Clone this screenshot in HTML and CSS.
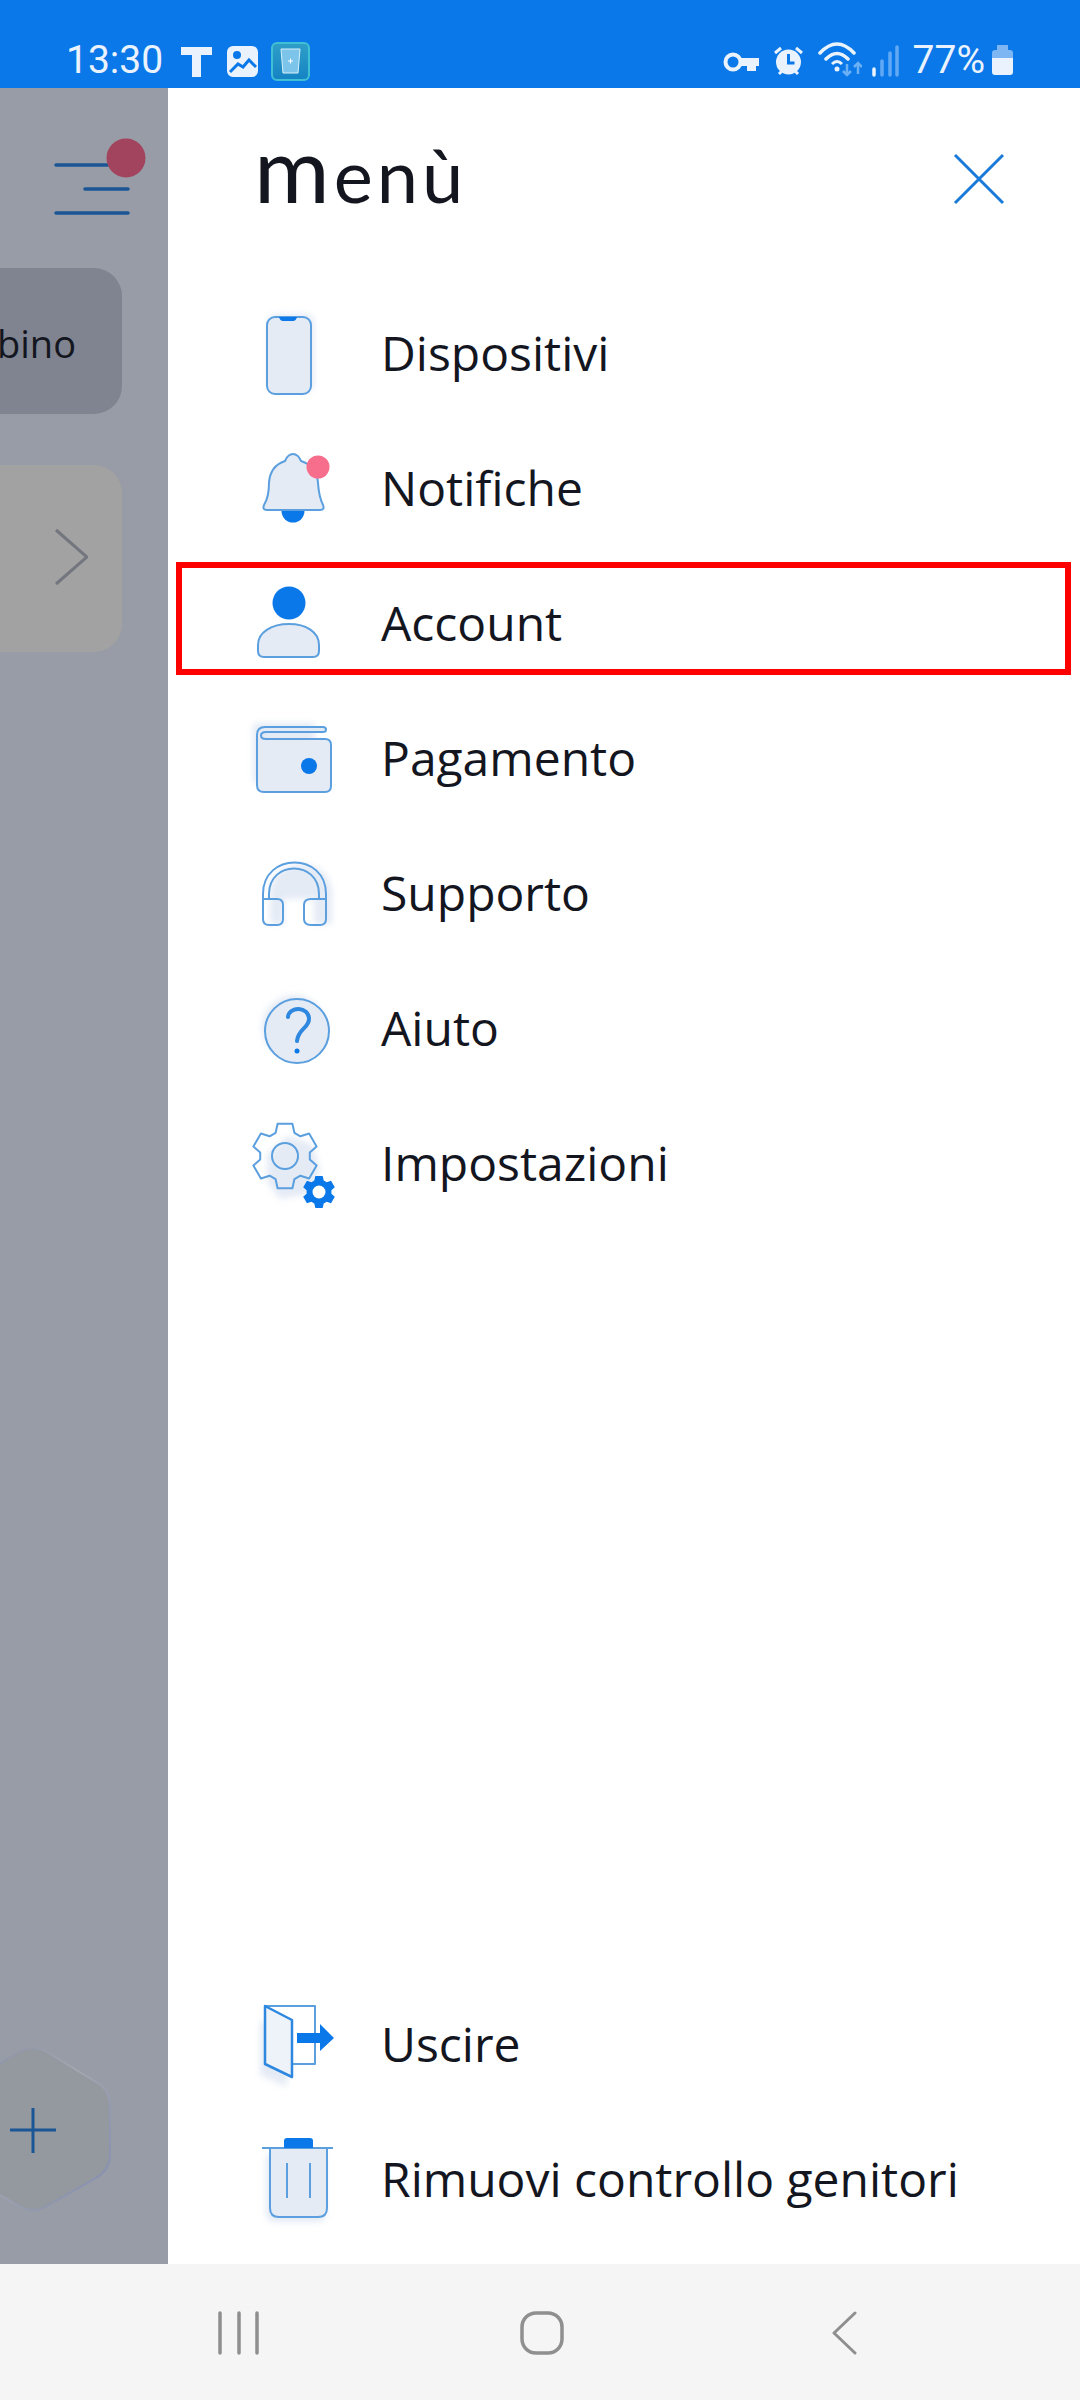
FILE: index.html
```html
<!DOCTYPE html>
<html lang="it">
<head>
  <meta charset="UTF-8" />
  <meta name="viewport" content="width=device-width, initial-scale=1.0" />
  <title>Menù</title>
  <link rel="stylesheet" href="styles.css">
</head>
<body>
  <div class="status-bar">
    <div class="status-group">
      <span class="clock">13:30</span>
      <svg class="gap-18" width="31" height="44" viewBox="0 0 31 44"><path class="si" d="M0 9h31v8H20v22h-9V17H0z"/></svg>
      <svg class="gap-15" width="31" height="44" viewBox="0 0 31 44"><rect class="si" y="8" width="31" height="31" rx="6"/><circle cx="10" cy="17" r="4" fill="#0a78e8"/><path d="M3 34l8-8 5 3 6-7 7 7" fill="none" stroke="#0a78e8" stroke-width="3"/></svg>
      <svg class="gap-13" width="39" height="44" viewBox="0 0 39 44"><defs><linearGradient id="acqua" x1="0" y1="0" x2="0" y2="1"><stop offset="0" stop-color="#2f9fc8"/><stop offset="1" stop-color="#1583c4"/></linearGradient></defs><rect x="1" y="5" width="37" height="37" rx="5" fill="url(#acqua)" stroke="#40c0d4" stroke-width="2"/><path d="M10 11h19l-2 24H12z" fill="#7cc4ea" stroke="#d8f0fa" stroke-width="1"/><path d="M17 23h5M19.500 20.500v5" stroke="#fff" stroke-width="1"/></svg>
    </div>
    <div class="status-group">
      <svg width="36" height="44" viewBox="0 0 36 44"><circle cx="10" cy="24" r="7.500" fill="none" stroke="#eaf3fd" stroke-width="4"/><path class="si" d="M17 20h19v8h-3v5h-9v-5h-7z"/></svg>
      <svg class="gap-15" width="29" height="44" viewBox="0 0 29 44"><circle class="si" cx="14.500" cy="24" r="12.500"/><path d="M14.500 16v9h6" fill="none" stroke="#0a78e8" stroke-width="3"/><path d="M1 15l6-5M28 15l-6-5M5 36l3-3M24 36l-3-3" stroke="#eaf3fd" stroke-width="3"/></svg>
      <svg class="gap-15" width="44" height="44" viewBox="0 0 44 44"><path d="M2 15Q19-3 36 15M8 21Q19 10 30 21" fill="none" stroke="#eaf3fd" stroke-width="3.500" stroke-linecap="round"/><path d="M14 26Q19 21 24 26" fill="none" stroke="#eaf3fd" stroke-width="3"/><circle class="si" cx="19" cy="31" r="2.500"/><path d="M29 26v11M25 33l4 4 4-4M40 36V25M36 29l4-4 4 4" fill="none" stroke="#6bb0f5" stroke-width="2.500"/></svg>
      <svg class="gap-10" width="27" height="44" viewBox="0 0 27 44"><path d="M2 31v6" stroke="#eaf3fd" stroke-width="3.500" stroke-linecap="round"/><path d="M10 23v14M18 15v22M25 9v28" stroke="#62a9f5" stroke-width="3.500" stroke-linecap="round"/></svg>
      <span class="percent">77%</span>
      <svg class="gap-7" width="21" height="44" viewBox="0 0 21 44"><path d="M5 7h11v5h2a3 3 0 0 1 3 3v5H0v-5a3 3 0 0 1 3-3h2z" fill="#7db6f3"/><path class="si" d="M0 20h21v14a3 3 0 0 1-3 3H3a3 3 0 0 1-3-3z"/></svg>
    </div>
  </div>

  <div class="main">
    <aside class="scrim">
      <div class="hamburger">
        <svg width="168" height="100" viewBox="0 0 168 100"><path d="M56 35h72M85 59h43M56 83h72" stroke="#1a5596" stroke-width="3.500" stroke-linecap="round"/><circle cx="126" cy="28" r="19.500" fill="#a3445f"/></svg>
      </div>
      <div class="chip">bino</div>
      <div class="card">
        <svg width="34" height="58" viewBox="0 0 34 58"><path d="M2 2l31 27L2 56" fill="none" stroke="#73767e" stroke-width="3"/></svg>
      </div>
      <div class="fab">
        <svg width="168" height="172" viewBox="0 0 168 172">
          <defs><linearGradient id="bordo" x1="0" y1="0" x2="1" y2="1"><stop offset="0" stop-color="#868ea8"/><stop offset=".45" stop-color="#a4a8b0"/><stop offset="1" stop-color="#7f8ab0"/></linearGradient></defs>
          <path class="hex" d="M19 8Q33 0 47 8L96 38Q110 46 110 62V110Q110 126 96 134L47 162Q33 170 19 162L-30 134V38z"/>
          <path d="M33 64v45M10 86h46" stroke="#1a5596" stroke-width="3"/>
        </svg>
      </div>
    </aside>

    <nav class="panel">
      <header class="panel-head">
        <h1 class="title">Menù</h1>
        <svg width="52" height="52" viewBox="0 0 52 52"><path d="M2 2l48 48M50 2L2 50" stroke="#1a7ad8" stroke-width="3"/></svg>
      </header>

      <ul class="menu">
        <li class="row">
          <svg class="ico" viewBox="0 0 100 100">
            <rect class="glow" x="28" y="10" width="46" height="78" rx="8"/>
            <rect class="shape" x="27" y="13" width="44" height="77" rx="8"/>
            <path class="solid" d="M39 13h18q-1 4-4 4H43q-3 0-4-4z"/>
          </svg>
          <span>Dispositivi</span>
        </li>
        <li class="row">
          <svg class="ico" viewBox="0 0 100 100">
            <circle class="solid" cx="53" cy="72" r="11.500"/>
            <path class="shape" d="M53 15q5 0 8 7 16 5 17 22 1 14 5 22 2 5-3 5H27q-5 0-3-5 5-8 5-22 1-17 16-22 3-7 8-7z"/>
            <circle class="dot" cx="78" cy="28" r="11.500"/>
          </svg>
          <span>Notifiche</span>
        </li>
        <li class="row row-marked">
          <svg class="ico" viewBox="0 0 100 100">
            <circle class="solid" cx="49" cy="29" r="16.500"/>
            <path class="shape" d="M18 71c0-13 14-21 31-21s30 8 30 21v6q0 6-6 6H24q-6 0-6-6z"/>
          </svg>
          <span>Account</span>
        </li>
        <li class="row">
          <svg class="ico" viewBox="0 0 100 100">
            <rect class="glow" x="13" y="14" width="62" height="60" rx="4"/>
            <path class="shape" d="M17 26q0-8 8-8h58q3 0 3 2.500T83 23H26q-5 0-5 3.500T26 30h59q6 0 6 6v41q0 6-6 6H24q-7 0-7-7z"/>
            <circle class="solid" cx="69" cy="57" r="8"/>
          </svg>
          <span>Pagamento</span>
        </li>
        <li class="row">
          <svg class="ico" viewBox="0 0 100 100">
            <path class="glow" d="M30 50C30 10 92 10 92 50V80H74V55H44V80H30z"/>
            <path class="line" d="M23 70V50C23 8 86 8 86 50V70"/>
            <path class="line" d="M29 55V50C29 16 79 16 79 50V55"/>
            <path class="line" d="M23 55h14q6 0 6 6v14q0 6-6 6h-8q-6 0-6-6zM86 55H71q-7 0-7 6v14q0 6 7 6h9q6 0 6-6z"/>
          </svg>
          <span>Supporto</span>
        </li>
        <li class="row">
          <svg class="ico" viewBox="0 0 100 100">
            <circle class="glow" cx="54" cy="48" r="32"/>
            <circle class="shape" cx="57" cy="52" r="32"/>
            <path class="mark" d="M48 38c1-11 21-11 21 2 0 9-11 10-12 22"/>
            <circle class="solid" cx="57" cy="72" r="2.500"/>
          </svg>
          <span>Aiuto</span>
        </li>
        <li class="row">
          <svg class="ico" viewBox="0 0 100 100">
            <path class="glow" d="M48 22L72 30 80 55 70 80 40 85 27 68 27 40z"/>
            <g transform="translate(45 42)">
              <polygon class="line" points="-7.400,-32.200 7.400,-32.200 9.400,-23.200 15.400,-19.700 24.100,-22.500 31.600,-9.600 24.800,-3.500 24.800,3.500 31.600,9.600 24.100,22.500 15.400,19.700 9.400,23.200 7.400,32.200 -7.400,32.200 -9.400,23.200 -15.400,19.700 -24.100,22.500 -31.600,9.600 -24.800,3.500 -24.800,-3.500 -31.600,-9.600 -24.100,-22.500 -15.400,-19.700 -9.400,-23.200"/>
              <circle class="line" r="13"/>
            </g>
            <polygon class="solid" transform="translate(79 78) scale(.5)" points="-7.400,-32.200 7.400,-32.200 9.400,-23.200 15.400,-19.700 24.100,-22.500 31.600,-9.600 24.800,-3.500 24.800,3.500 31.600,9.600 24.100,22.500 15.400,19.700 9.400,23.200 7.400,32.200 -7.400,32.200 -9.400,23.200 -15.400,19.700 -24.100,22.500 -31.600,9.600 -24.800,3.500 -24.800,-3.500 -31.600,-9.600 -24.100,-22.500 -15.400,-19.700 -9.400,-23.200"/>
            <circle cx="79" cy="78" r="6.500" fill="#fff"/>
          </svg>
          <span>Impostazioni</span>
        </li>
      </ul>

      <ul class="menu menu-bottom">
        <li class="row">
          <svg class="ico" viewBox="0 0 100 100">
            <path class="glow" d="M20 25L47 38V92L20 80z"/>
            <path class="line" d="M25 11H75V69H52"/>
            <path class="pale" d="M25 11L52 25V82L25 69z"/>
            <path class="solid" d="M57 38H80V29L94 43 80 56V48H57z"/>
          </svg>
          <span>Uscire</span>
        </li>
        <li class="row">
          <svg class="ico" viewBox="0 0 100 100">
            <rect class="glow" x="26" y="22" width="60" height="70" rx="8"/>
            <path class="shape" d="M30 18H87V78q0 9-9 9H39q-9 0-9-9z"/>
            <path class="line" d="M22 18H93M47 33V68M70 33V68"/>
            <path class="solid" d="M44 18V11q0-3 3-3H70q3 0 3 3V18z"/>
          </svg>
          <span>Rimuovi controllo genitori</span>
        </li>
      </ul>
    </nav>
  </div>

  <div class="nav-bar">
    <svg width="60" height="44" viewBox="0 0 60 44"><path d="M11 2v40M30 2v40M48 2v40" stroke="#8f8f8f" stroke-width="3.500" stroke-linecap="round"/></svg>
    <svg width="60" height="44" viewBox="0 0 60 44"><rect x="10" y="2" width="40" height="40" rx="14" fill="none" stroke="#8f8f8f" stroke-width="3.500"/></svg>
    <svg width="60" height="44" viewBox="0 0 60 44"><path d="M40 2L19 22l21 20" fill="none" stroke="#8f8f8f" stroke-width="3" stroke-linecap="round" stroke-linejoin="round"/></svg>
  </div>
</body>
</html>
```

FILE: styles.css
```css
* {
  box-sizing: border-box;
}
body {
  margin: 0;
  width: 1080px;
  height: 2400px;
  display: flex;
  flex-direction: column;
  overflow: hidden;
  font-family: "Open Sans", sans-serif;
  color: #14161f;
  background: #fff;
}
svg {
  display: block;
  flex: none;
}

/* status bar */
.status-bar {
  height: 88px;
  padding: 38px 67px 6px 66px;
  display: flex;
  justify-content: space-between;
  background: #0a78e8;
}
.status-group {
  display: flex;
  align-items: center;
  font-family: Roboto, sans-serif;
  font-size: 39px;
  color: #eaf3fd;
}
.si {
  fill: #eaf3fd;
}
.gap-7 { margin-left: 7px; }
.gap-10 { margin-left: 10px; }
.gap-13 { margin-left: 13px; }
.gap-15 { margin-left: 15px; }
.gap-18 { margin-left: 18px; }
.percent {
  margin-left: 14px;
}

/* dimmed page behind the drawer */
.main {
  flex: 1;
  display: flex;
  min-height: 0;
}
.scrim {
  width: 168px;
  display: flex;
  flex-direction: column;
  overflow: hidden;
  background: #989ca6;
}
.hamburger {
  height: 180px;
  padding-top: 42px;
}
.chip {
  width: 182px;
  height: 146px;
  margin-left: -60px;
  padding: 3px 46px 0 0;
  display: flex;
  align-items: center;
  justify-content: flex-end;
  border-radius: 28px;
  background: #7f8490;
  font-size: 38px;
}
.card {
  width: 182px;
  height: 187px;
  margin: 51px 0 0 -60px;
  padding: 0 34px 4px 0;
  display: flex;
  align-items: center;
  justify-content: flex-end;
  border-radius: 28px;
  background: #a2a2a2;
}
.fab {
  margin-top: auto;
  margin-bottom: 48px;
}
.hex {
  fill: #94989f;
  stroke: url(#bordo);
  stroke-width: 2;
}

/* drawer */
.panel {
  flex: 1;
  display: flex;
  flex-direction: column;
  padding-bottom: 17px;
  background: #fff;
}
.panel-head {
  height: 198px;
  padding: 65px 75px 0 86px;
  display: flex;
  justify-content: space-between;
  align-items: flex-start;
}
.title {
  margin: -27px 0 0;
  font-family: Lato, sans-serif;
  font-size: 74px;
  font-weight: 400;
  line-height: 84px;
  letter-spacing: 4px;
  color: #14161f;
}
.title::first-letter {
  text-transform: lowercase;
  font-size: 92px;
}
.menu {
  margin: 0;
  padding: 0;
  list-style: none;
}
.menu-bottom {
  margin-top: auto;
}
.row {
  position: relative;
  height: 135px;
  padding-left: 72px;
  display: flex;
  align-items: center;
  gap: 41px;
  font-size: 48px;
}
.row span {
  margin-top: -2px;
}
.row-marked::after {
  content: "";
  position: absolute;
  left: 8px;
  right: 9px;
  top: 6px;
  height: 113px;
  box-sizing: border-box;
  border: 6px solid #f00;
}
.ico {
  width: 100px;
  height: 100px;
}
.shape {
  fill: #e5ebf5;
  stroke: #5b9fdf;
  stroke-width: 2;
  stroke-linejoin: round;
}
.pale {
  fill: #eef2f9;
  stroke: #2f88e0;
  stroke-width: 2.500;
  stroke-linejoin: round;
}
.line {
  fill: none;
  stroke: #5b9fdf;
  stroke-width: 2;
  stroke-linejoin: round;
}
.solid {
  fill: #0a78e8;
}
.dot {
  fill: #f76d8c;
}
.mark {
  fill: none;
  stroke: #2f88e0;
  stroke-width: 4;
  stroke-linecap: round;
}
.glow {
  fill: #e5ebf5;
  filter: blur(3px);
}

/* android nav */
.nav-bar {
  height: 136px;
  padding: 47px 205px 0 209px;
  display: flex;
  justify-content: space-between;
  align-items: flex-start;
  background: #f5f5f5;
}
```
